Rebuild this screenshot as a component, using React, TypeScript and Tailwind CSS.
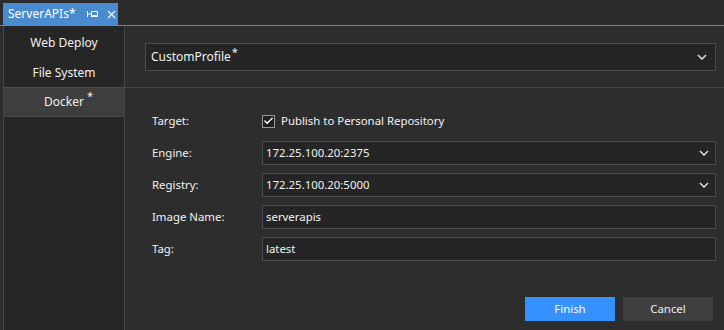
import { Check, X } from "lucide-react";

const font = { fontFamily: '"Noto Sans", "Segoe UI", sans-serif' };

function Chevron() {
  return (
    <svg width="10" height="6" viewBox="0 0 10 6" className="shrink-0">
      <polyline points="1,1 5,5 9,1" fill="none" stroke="#d6d6d6" strokeWidth="1.6" />
    </svg>
  );
}

function Field({ value, select }: { value: string; select?: boolean }) {
  return (
    <div className="flex-1 h-[24px] flex items-center justify-between bg-[#252525] border border-[#4b4b4b] pl-[3px] pr-[6px] text-[#f1f1f1]">
      <span>{value}</span>
      {select && <Chevron />}
    </div>
  );
}

function Row({ label, children }: { label: string; children: React.ReactNode }) {
  return (
    <div className="flex items-center h-[24px]">
      <div className="w-[110px] shrink-0 text-[#f1f1f1]">{label}</div>
      {children}
    </div>
  );
}

export default function App() {
  return (
    <div className="w-[724px] h-[330px] bg-[#2d2d2d] flex flex-col text-[11.4px] leading-none overflow-hidden" style={font}>
      <div className="h-[26px] shrink-0 bg-[#2b2b2b] border-b border-[#4a8bd0] pl-[3px] pt-[3px] flex items-end">
        <div className="w-[115px] h-[22px] bg-[#4a8bd0] flex items-center pl-[5px] text-white text-[12px]">
          <span>ServerAPIs*</span>
          <svg width="12" height="10" viewBox="0 0 12 10" className="ml-[11px]">
            <line x1="0.5" y1="2" x2="0.5" y2="8" stroke="#fff" strokeWidth="1" />
            <line x1="1" y1="5" x2="4" y2="5" stroke="#fff" strokeWidth="1" />
            <rect x="4.5" y="2.5" width="6" height="5" fill="none" stroke="#fff" strokeWidth="1" />
            <line x1="4.5" y1="6.5" x2="10.5" y2="6.5" stroke="#fff" strokeWidth="1" />
          </svg>
          <X size={13} strokeWidth={2} className="ml-[6px] text-white" />
        </div>
      </div>
      <div className="flex-1 flex pl-[3px]">
        <div className="w-[122px] shrink-0 bg-[#262626] border-x border-[#464646] pt-[2px] text-[#f1f1f1] text-[12px]">
          <div className="h-[30px] flex items-center justify-center">Web Deploy</div>
          <div className="h-[29px] flex items-center justify-center">File System</div>
          <div className="h-[30px] flex items-center justify-center bg-[#3e3e3e] border-y border-[#4a4a4a]">
            <span className="relative">
              Docker
              <span className="absolute -right-[9px] -top-[6px] text-[11px]">*</span>
            </span>
          </div>
        </div>
        <div className="flex-1 flex flex-col">
          <div className="pt-[17px] pb-[16px] pl-[20px] pr-[8px] border-b border-[#474747]">
            <div className="h-[28px] flex items-center justify-between bg-[#252525] border border-[#4b4b4b] pl-[5px] pr-[8px] text-[#f1f1f1] text-[12px]">
              <span className="relative">
                CustomProfile
                <span className="absolute -right-[7px] -top-[5px] text-[11px]">*</span>
              </span>
              <Chevron />
            </div>
          </div>
          <div className="pt-[21px] pl-[27px] pr-[8px] flex flex-col gap-[8px]">
            <Row label="Target:">
              <div className="flex items-center gap-[6px] text-[#f1f1f1]">
                <div className="w-[13px] h-[13px] border border-[#9a9a9a] bg-[#1f1f1f] flex items-center justify-center">
                  <Check size={12} strokeWidth={3} className="text-white" />
                </div>
                <span>Publish to Personal Repository</span>
              </div>
            </Row>
            <Row label="Engine:">
              <Field value="172.25.100.20:2375" select />
            </Row>
            <Row label="Registry:">
              <Field value="172.25.100.20:5000" select />
            </Row>
            <Row label="Image Name:">
              <Field value="serverapis" />
            </Row>
            <Row label="Tag:">
              <Field value="latest" />
            </Row>
            <div className="mt-[28px] flex justify-end gap-[8px] pr-[3px]">
              <button className="w-[90px] h-[24px] bg-[#3591ff] text-white">Finish</button>
              <button className="w-[90px] h-[24px] bg-[#3f3f3f] text-[#f1f1f1]">Cancel</button>
            </div>
          </div>
        </div>
      </div>
    </div>
  );
}
